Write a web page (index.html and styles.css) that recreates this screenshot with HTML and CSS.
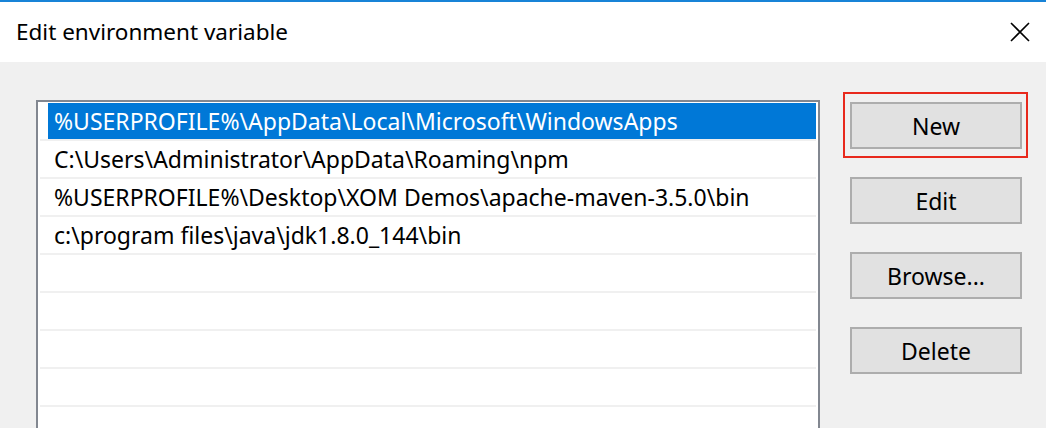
FILE: index.html
```html
<!DOCTYPE html>
<html>
<head>
<meta charset="utf-8">
<link rel="stylesheet" href="styles.css">
</head>
<body>
<div class="dialog">
  <div class="titlebar">
    <span class="title">Edit environment variable</span>
    <svg class="close" width="20" height="20" viewBox="0 0 20 20"><path d="M1 1 L19 19 M19 1 L1 19" stroke="#000" stroke-width="1.6" fill="none"/></svg>
  </div>
  <div class="content">
    <div class="listbox">
      <div class="row"><span class="cell selected">%USERPROFILE%\AppData\Local\Microsoft\WindowsApps</span></div>
      <div class="row"><span class="cell">C:\Users\Administrator\AppData\Roaming\npm</span></div>
      <div class="row"><span class="cell">%USERPROFILE%\Desktop\XOM Demos\apache-maven-3.5.0\bin</span></div>
      <div class="row"><span class="cell">c:\program files\java\jdk1.8.0_144\bin</span></div>
      <div class="row"><span class="cell"></span></div>
      <div class="row"><span class="cell"></span></div>
      <div class="row"><span class="cell"></span></div>
      <div class="row"><span class="cell"></span></div>
      <div class="row"><span class="cell"></span></div>
    </div>
    <div class="buttons">
      <button class="btn focused">New</button>
      <button class="btn">Edit</button>
      <button class="btn">Browse...</button>
      <button class="btn">Delete</button>
    </div>
  </div>
</div>
</body>
</html>
```
FILE: styles.css
```css
html, body {
  margin: 0;
  padding: 0;
  background: #f0f0f0;
}
* {
  box-sizing: border-box;
}
body {
  width: 1046px;
  height: 428px;
  overflow: hidden;
  font-family: "Noto Sans", "Open Sans", sans-serif;
  color: #000;
}
.dialog {
  display: flex;
  flex-direction: column;
  height: 428px;
  overflow: hidden;
}
.titlebar {
  flex-shrink: 0;
  border-top: 2px solid #1883d7;
  height: 62px;
  background: #fff;
  display: flex;
  align-items: center;
  justify-content: space-between;
  padding: 0 16px 0 16px;
}
.title {
  font-size: 22.5px;
  line-height: 1;
}
.close {
  display: block;
}
.content {
  flex: 1;
  min-height: 0;
  display: flex;
  align-items: flex-start;
  padding: 38px 0 0 36px;
  overflow: hidden;
}
.listbox {
  flex-shrink: 0;
  width: 784px;
  height: 340px;
  border: 2px solid #828790;
  background: #fff;
  padding: 1px 2px 0 2px;
  overflow: hidden;
}
.row {
  height: 38px;
  border-bottom: 2px solid #f0f0f0;
  display: flex;
}
.cell {
  flex: 1;
  margin-left: 8px;
  padding-left: 6px;
  font-size: 23px;
  line-height: 36px;
  white-space: nowrap;
}
.cell.selected {
  background: #0078d7;
  color: #fff;
}
.buttons {
  display: flex;
  flex-direction: column;
  gap: 28px;
  padding: 2px 0 0 30px;
}
.btn {
  position: relative;
  width: 172px;
  height: 47px;
  border: 2px solid #adadad;
  background: #e1e1e1;
  font-family: inherit;
  font-size: 23px;
  color: #000;
  padding: 0;
}
.btn.focused::after {
  content: "";
  position: absolute;
  left: -9px;
  top: -12px;
  right: -8px;
  bottom: -11px;
  border: 2px solid #e8291c;
}
```
